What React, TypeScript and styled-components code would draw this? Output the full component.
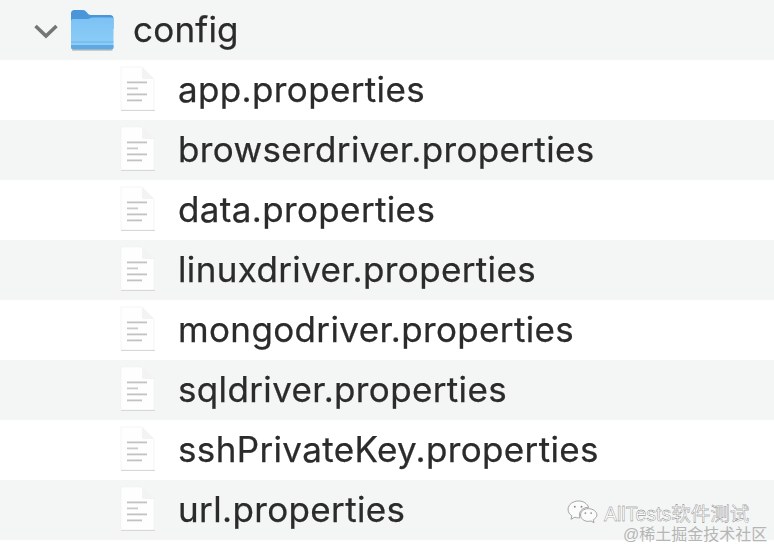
import { createGlobalStyle } from 'styled-components';
import styled from 'styled-components';

const files = [
    'app.properties',
    'browserdriver.properties',
    'data.properties',
    'linuxdriver.properties',
    'mongodriver.properties',
    'sqldriver.properties',
    'sshPrivateKey.properties',
    'url.properties',
];

const GlobalStyle = createGlobalStyle`
    html, body {
        margin: 0;
        padding: 0;
        background: #fff;
        overflow: hidden;
    }
`

function Chevron() {
    return (
        <ChevronSvg viewBox="0 0 26 16">
            <path d="M2.5 3 L13 13 L23.5 3" fill="none" stroke="#757575" strokeWidth="3.6" />
        </ChevronSvg>
    );
}

function FolderIcon() {
    return (
        <FolderSvg viewBox="0 0 44 42">
            <defs>
                <linearGradient id="folderBody" x1="0" y1="0" x2="0" y2="1">
                    <stop offset="0" stopColor="#7cc2f4" />
                    <stop offset="1" stopColor="#8fcff7" />
                </linearGradient>
            </defs>
            <path d="M1 4.5 Q1 1 4.5 1 H13 Q15 1 16.5 3 L18 4.8 Q19 6 21 6 H40 Q43.5 6 43.5 9.5 V20 H1 Z" fill="#4a96d8" />
            <path d="M1 12 Q1 10 3 10 H17 Q19 10 20.5 9 Q21.5 8.4 23 8.4 H41.5 Q43.5 8.4 43.5 10.5 V38 Q43.5 40.5 41 40.5 H3.5 Q1 40.5 1 38 Z" fill="url(#folderBody)" />
            <rect x="1" y="32.5" width="42.5" height="1" fill="#6cb2e8" />
            <path d="M1 36 H43.5 V38 Q43.5 40.5 41 40.5 H3.5 Q1 40.5 1 38 Z" fill="#5ea9e4" />
            <rect x="2" y="40.5" width="40.5" height="1.2" fill="#9a9488" opacity="0.6" />
        </FolderSvg>
    );
}

function FileIcon() {
    return (
        <FileSvg viewBox="0 0 36 46">
            <path d="M1 1 H22 L34 13 V44 H1 Z" fill="#fefefe" stroke="#f0f0f0" strokeWidth="0.6" />
            <path d="M22 1 L34 13 H24 Q22 13 22 11 Z" fill="#f3f3f3" />
            <rect x="1" y="44" width="34" height="1" fill="#d8d8d8" />
            <rect x="7" y="15.5" width="20" height="1.8" fill="#c2c2c2" />
            <rect x="7" y="21.5" width="11" height="1.8" fill="#cacaca" />
            <rect x="7" y="27.5" width="20" height="1.8" fill="#c2c2c2" />
            <rect x="7" y="33.5" width="15" height="1.8" fill="#c2c2c2" />
        </FileSvg>
    );
}

function WeChatIcon() {
    return (
        <WeChatSvg viewBox="0 0 32 26">
            <path d="M12 1 C6 1 1 4.8 1 9.8 C1 12.6 2.6 15 5 16.6 L4 20 L8 18 C9.4 18.4 10.6 18.6 12 18.6 C12.6 18.6 13 18.6 13.4 18.5 C13 17.4 12.8 16.4 12.8 15.4 C12.8 11 17 7.6 22.4 7.6 C21 3.8 16.8 1 12 1 Z" fill="#fbfbfb" stroke="#8c8c8c" strokeWidth="0.8" />
            <path d="M22 9 C17.4 9 14 12 14 15.6 C14 19.4 17.4 22.2 22 22.2 C23 22.2 24 22 24.8 21.8 L28 23.6 L27.2 20.6 C29.4 19.2 31 17.6 31 15.6 C31 12 26.8 9 22 9 Z" fill="#fbfbfb" stroke="#8c8c8c" strokeWidth="0.8" />
            <circle cx="8" cy="7" r="1" fill="#8c8c8c" />
            <circle cx="15" cy="7" r="1" fill="#8c8c8c" />
            <circle cx="19" cy="13.6" r="0.9" fill="#8c8c8c" />
            <circle cx="25" cy="13.6" r="0.9" fill="#8c8c8c" />
        </WeChatSvg>
    );
}

function App() {
    return (
        <Page>
            <GlobalStyle />
            <FolderRow>
                <Chevron />
                <FolderIcon />
                <FolderName>config</FolderName>
            </FolderRow>
            {files.map((name, index) => (
                <FileRow key={name} $striped={index % 2 === 1}>
                    <FileIcon />
                    <FileName>{name}</FileName>
                </FileRow>
            ))}
            <Watermark>
                <WeChatLine>
                    <WeChatIcon />
                    <Account>AllTests软件测试</Account>
                </WeChatLine>
                <Credit>@稀土掘金技术社区</Credit>
            </Watermark>
        </Page>
    );
}

export default App;

const Page = styled.div`
    position: relative;
    width: 774px;
    height: 546px;
    background-color: #fff;
    font-family: "Inter", "Liberation Sans", "Noto Sans CJK SC", sans-serif;
    color: #2b2b2b;
    overflow: hidden;
`
const FolderRow = styled.div`
    display: flex;
    align-items: center;
    height: 60px;
    padding-left: 33px;
    background-color: #f4f5f5;
`
const ChevronSvg = styled.svg`
    width: 26px;
    height: 16px;
    margin-top: 2px;
    filter: blur(0.4px);
`
const FolderSvg = styled.svg`
    width: 46px;
    height: 42px;
    margin-left: 10px;
    filter: blur(0.4px);
`
const FolderName = styled.span`
    margin-left: 18px;
    margin-bottom: 2px;
    font-size: 35px;
    letter-spacing: 0.2px;
    -webkit-text-stroke: 0.25px #2b2b2b;
    filter: blur(0.4px);
`
const FileRow = styled.div<{ $striped: boolean }>`
    display: flex;
    align-items: center;
    height: 60px;
    padding-left: 120px;
    background-color: ${(props) => (props.$striped ? '#f4f5f5' : '#fff')};
`
const FileSvg = styled.svg`
    width: 36px;
    height: 46px;
    margin-bottom: 2px;
    filter: blur(0.5px);
`
const FileName = styled.span`
    margin-left: 22px;
    margin-bottom: 2px;
    font-size: 35px;
    letter-spacing: 0.36px;
    -webkit-text-stroke: 0.25px #2b2b2b;
    filter: blur(0.4px);
`
const Watermark = styled.div`
    position: absolute;
    right: 0;
    top: 498px;
    width: 216px;
    display: flex;
    flex-direction: column;
`
const WeChatLine = styled.div`
    display: flex;
    align-items: center;
    gap: 6px;
    margin-left: 9px;
`
const WeChatSvg = styled.svg`
    width: 31px;
    height: 25px;
`
const Account = styled.span`
    font-size: 19.5px;
    white-space: nowrap;
    color: #fff;
    -webkit-text-stroke: 0.35px #6f6f6f;
    font-family: "Liberation Sans", "Noto Sans CJK SC", sans-serif;
`
const Credit = styled.div`
    margin-top: -2px;
    margin-left: 65px;
    font-size: 16px;
    line-height: 19px;
    white-space: nowrap;
    color: #b5b5b5;
    font-family: "Liberation Sans", "Noto Sans CJK SC", sans-serif;
`
